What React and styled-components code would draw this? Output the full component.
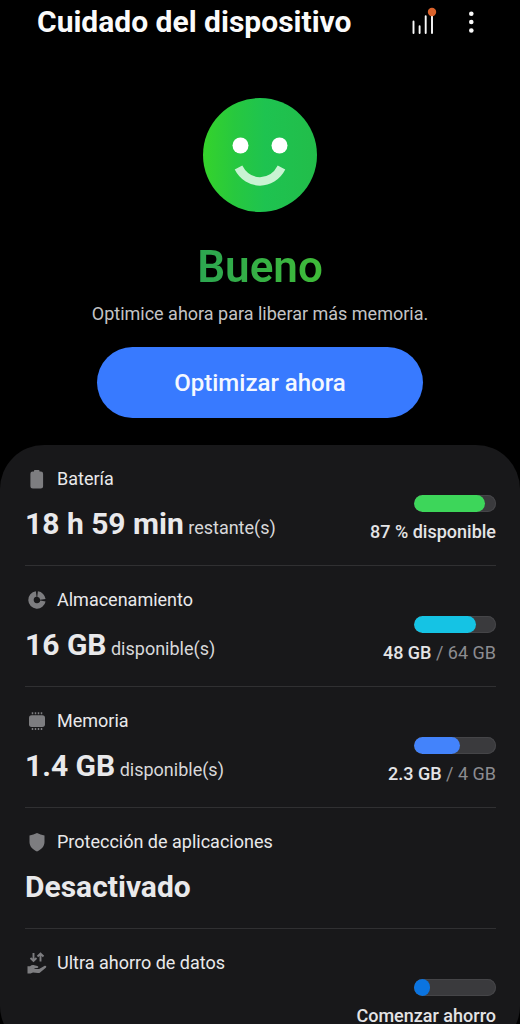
import React from 'react';
import styled, { createGlobalStyle } from 'styled-components';

const GlobalStyle = createGlobalStyle`
    * {
        box-sizing: border-box;
    }
    body {
        margin: 0;
        background: #000;
        color: #e9e9eb;
        font-family: 'Roboto', 'Liberation Sans', sans-serif;
    }
`;

const Screen = styled.div`
    height: 100vh;
    overflow-y: auto;
    scrollbar-width: none;
`;

const Header = styled.header`
    display: flex;
    align-items: center;
    gap: 16px;
    padding: 6px 33px 6px 37px;
`;

const Title = styled.h1`
    flex: 1;
    margin: 0;
    font-size: 30px;
    line-height: 32px;
    font-weight: 700;
    color: #fafafa;
`;

const IconButton = styled.button`
    width: 32px;
    height: 32px;
    padding: 0;
    border: 0;
    background: none;
    color: #fafafa;
    cursor: pointer;
    svg {
        display: block;
    }
`;

const Hero = styled.section`
    display: flex;
    flex-direction: column;
    align-items: center;
    padding: 54px 24px 27px;
    text-align: center;
`;

const Status = styled.h2`
    margin: 29px 0 9px;
    font-size: 44px;
    line-height: 52px;
    font-weight: 600;
    color: transparent;
    background: linear-gradient(90deg, #2ca651, #3fbb38);
    background-clip: text;
`;

const Hint = styled.p`
    margin: 0 0 21px;
    font-size: 18px;
    line-height: 24px;
    color: #c4c4c6;
`;

const OptimizeButton = styled.button`
    width: 69%;
    height: 71px;
    border: 0;
    border-radius: 36px;
    background: #387aff;
    color: #f4f8ff;
    font-family: inherit;
    font-size: 24px;
    font-weight: 500;
    cursor: pointer;
`;

const Panel = styled.ul`
    margin: 0;
    padding: 0 24px 0 25px;
    list-style: none;
    background: #18181a;
    border-radius: 44px;
`;

const Item = styled.li`
    border-bottom: 1px solid ${props => (props.$last ? 'transparent' : '#303032')};
`;

const Row = styled.a`
    display: flex;
    align-items: flex-end;
    justify-content: space-between;
    padding: 23px 0 22px;
    color: inherit;
    text-decoration: none;
`;

const Label = styled.div`
    display: flex;
    align-items: center;
    gap: 8px;
    height: 22px;
    margin-bottom: 16px;
    font-size: 18px;
    line-height: 22px;
    svg {
        flex: none;
        color: #7d7d80;
    }
`;

const Value = styled.div`
    height: 37px;
    font-size: 30px;
    line-height: 36px;
    font-weight: 700;
    small {
        font-size: 18px;
        line-height: 18px;
        font-weight: 400;
        color: #d8d8da;
    }
`;

const Usage = styled.div`
    display: flex;
    flex-direction: column;
    align-items: flex-end;
    gap: 9px;
`;

const Track = styled.div`
    width: 82px;
    height: 17px;
    overflow: hidden;
    border-radius: 9px;
    background: #3a3a3d;
    box-shadow: inset 0 0 0 1px #454548;
`;

const Fill = styled.div`
    height: 100%;
    border-radius: 9px;
    background: ${props => props.$color};
`;

const UsageText = styled.div`
    font-size: 18px;
    line-height: 22px;
    color: #8c8c90;
    b {
        font-weight: 500;
        color: #e4e4e6;
    }
`;

const FaceIcon = () => (
  <svg width="114" height="114" viewBox="0 0 114 114" aria-hidden="true">
    <defs>
      <linearGradient id="face" x1="0" y1="0" x2="1" y2="0">
        <stop offset="0" stopColor="#35d32b" />
        <stop offset="0.28" stopColor="#27c83f" />
        <stop offset="0.55" stopColor="#1ec350" />
        <stop offset="1" stopColor="#22bd4a" />
      </linearGradient>
    </defs>
    <circle cx="57" cy="57" r="57" fill="url(#face)" />
    <circle cx="37.5" cy="47.5" r="8" fill="#fff" />
    <circle cx="76.5" cy="47.5" r="8" fill="#fff" />
    <path d="M35.5 69.5C45 88 69 88 78.5 69.5" fill="none" stroke="#c9f3d3" strokeWidth="8.5" />
  </svg>
);

const SignalIcon = () => (
  <svg width="32" height="32" viewBox="0 0 32 32" aria-hidden="true">
    <path d="M6.5 15.5V27M12.6 20.3V27M18.7 10.3V27M25 10V27" stroke="currentColor" strokeWidth="1.9" strokeLinecap="round" />
    <circle cx="25" cy="6" r="4.2" fill="#d9622b" />
  </svg>
);

const MoreIcon = () => (
  <svg width="32" height="32" viewBox="0 0 32 32" fill="currentColor" aria-hidden="true">
    <circle cx="16.3" cy="7.8" r="2.3" />
    <circle cx="16.3" cy="16" r="2.3" />
    <circle cx="16.3" cy="24.5" r="2.3" />
  </svg>
);

const BatteryIcon = () => (
  <svg width="24" height="24" viewBox="0 0 24 24" fill="currentColor" aria-hidden="true">
    <path d="M9 3.8Q9 3 9.8 3h3.9q.8 0 .8.8V4.500h1.4q2.200 0 2.200 2.200V19q0 2.500-2.500 2.500H7.900Q5.400 21.500 5.400 19V6.700q0-2.200 2.200-2.200H9z" />
  </svg>
);

const StorageIcon = () => (
  <svg width="24" height="24" viewBox="0 0 24 24" fill="none" stroke="currentColor" strokeWidth="5.4" aria-hidden="true">
    <path d="M17.9 13A6 6 0 1 1 11.2 6.05" />
    <path d="M12.6 6.050A6 6 0 0 1 17.9 11.400" />
  </svg>
);

const MemoryIcon = () => (
  <svg width="24" height="24" viewBox="0 0 24 24" fill="currentColor" aria-hidden="true">
    <rect x="4" y="6.3" width="16" height="11.6" rx="2.6" />
    <path d="M7.5 3.3v2M10.5 3.3v2M13.5 3.3v2M16.5 3.3v2M7.5 19v2M10.5 19v2M13.5 19v2M16.5 19v2" stroke="currentColor" strokeWidth="1.5" />
  </svg>
);

const ShieldIcon = () => (
  <svg width="24" height="24" viewBox="0 0 24 24" fill="currentColor" aria-hidden="true">
    <path d="M12 3Q15.5 5 19.5 5.4V12C19.5 16.5 16.3 19.6 12 21.4 7.7 19.6 4.500 16.5 4.500 12V5.400Q8.500 5 12 3z" />
  </svg>
);

const DataSaverIcon = () => (
  <svg width="24" height="24" viewBox="0 0 24 24" fill="currentColor" aria-hidden="true">
    <path d="M8.500 2v8M5.500 7 8.500 10 11.500 7M15.500 10.500V2.500M12.500 5.500 15.500 2.500 18.500 5.500" fill="none" stroke="currentColor" strokeWidth="1.9" />
    <path d="M2.500 15.300H5c1.400-1.300 2.800-1.500 4.300-1l3 .8c1.600.4 1.300 2-.2 2l-2.600.1v.7h4.600l5.200-2.900c1.500-.8 2.800.6 1.500 1.700l-5.400 4.600c-.9.700-1.500.9-2.600.8L8 21.500 5.500 22.500h-3z" />
  </svg>
);

const items = [
  { id: 'bateria', Icon: BatteryIcon, label: 'Batería', value: '18 h 59 min', unit: 'restante(s)', percent: 87, color: '#3dd65a', used: '87 % disponible' },
  { id: 'almacenamiento', Icon: StorageIcon, label: 'Almacenamiento', value: '16 GB', unit: 'disponible(s)', percent: 75, color: '#15c3e4', used: '48 GB', total: '64 GB' },
  { id: 'memoria', Icon: MemoryIcon, label: 'Memoria', value: '1.4 GB', unit: 'disponible(s)', percent: 56, color: '#4383fb', used: '2.3 GB', total: '4 GB' },
  { id: 'proteccion', Icon: ShieldIcon, label: 'Protección de aplicaciones', value: 'Desactivado' },
  { id: 'datos', Icon: DataSaverIcon, label: 'Ultra ahorro de datos', percent: 20, color: '#0b74e0', used: 'Comenzar ahorro' },
];

export default function App() {
  return (
    <Screen>
      <GlobalStyle />
      <Header>
        <Title>Cuidado del dispositivo</Title>
        <IconButton type="button" aria-label="Diagnóstico"><SignalIcon /></IconButton>
        <IconButton type="button" aria-label="Más opciones"><MoreIcon /></IconButton>
      </Header>
      <Hero>
        <FaceIcon />
        <Status>Bueno</Status>
        <Hint>Optimice ahora para liberar más memoria.</Hint>
        <OptimizeButton type="button">Optimizar ahora</OptimizeButton>
      </Hero>
      <Panel>
        {items.map(({ id, Icon, label, value, unit, percent, color, used, total }, index) => (
          <Item key={id} $last={index === items.length - 1}>
            <Row href={'#' + id}>
              <div>
                <Label><Icon />{label}</Label>
                <Value>{value}{unit && <small> {unit}</small>}</Value>
              </div>
              {used && (
                <Usage>
                  <Track>
                    <Fill $color={color} style={{ width: percent + '%' }} />
                  </Track>
                  <UsageText><b>{used}</b>{total && ' / ' + total}</UsageText>
                </Usage>
              )}
            </Row>
          </Item>
        ))}
      </Panel>
    </Screen>
  );
}
